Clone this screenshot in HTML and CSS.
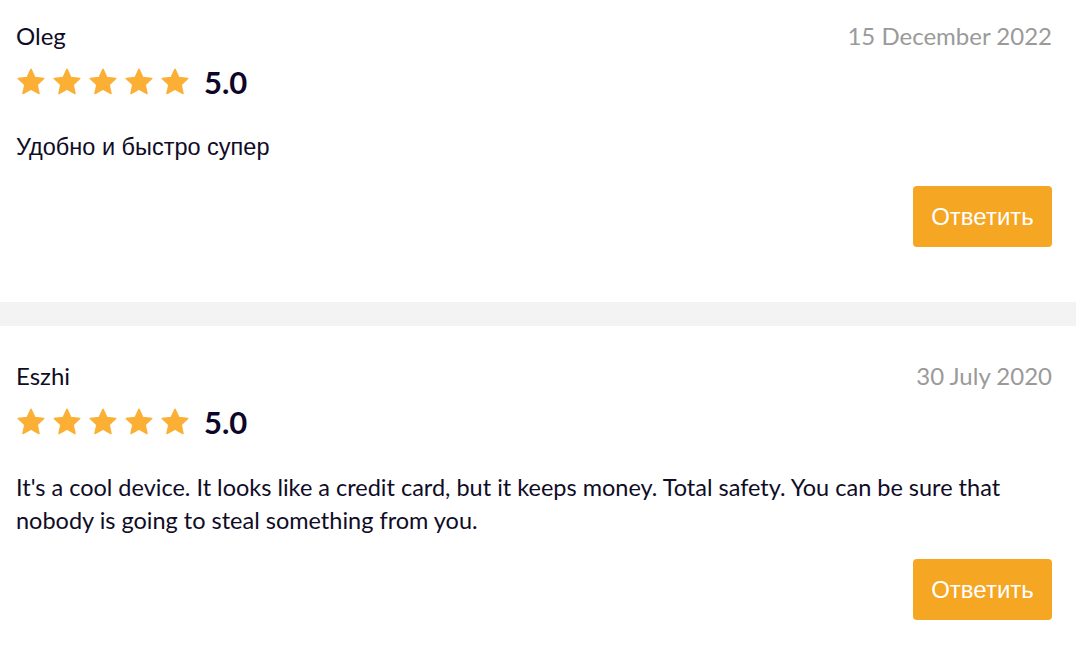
FILE: index.html
```html
<!DOCTYPE html>
<html lang="ru">
<head>
<meta charset="utf-8">
<link rel="stylesheet" href="styles.css">
</head>
<body>
<div class="reviews">
  <div class="review review-first">
    <div class="review-head">
      <div class="author">Oleg</div>
      <div class="date">15 December 2022</div>
    </div>
    <div class="rating">
      <div class="stars">
        <svg class="star" viewBox="0 0 24 24"><path d="M12 1.8l3.1 6.6 7.1.8-5.3 4.9 1.5 7.1L12 17.6l-6.4 3.6 1.5-7.1-5.3-4.9 7.1-.8z" stroke-linejoin="round"/></svg>
        <svg class="star" viewBox="0 0 24 24"><path d="M12 1.8l3.1 6.6 7.1.8-5.3 4.9 1.5 7.1L12 17.6l-6.4 3.6 1.5-7.1-5.3-4.9 7.1-.8z" stroke-linejoin="round"/></svg>
        <svg class="star" viewBox="0 0 24 24"><path d="M12 1.8l3.1 6.6 7.1.8-5.3 4.9 1.5 7.1L12 17.6l-6.4 3.6 1.5-7.1-5.3-4.9 7.1-.8z" stroke-linejoin="round"/></svg>
        <svg class="star" viewBox="0 0 24 24"><path d="M12 1.8l3.1 6.6 7.1.8-5.3 4.9 1.5 7.1L12 17.6l-6.4 3.6 1.5-7.1-5.3-4.9 7.1-.8z" stroke-linejoin="round"/></svg>
        <svg class="star" viewBox="0 0 24 24"><path d="M12 1.8l3.1 6.6 7.1.8-5.3 4.9 1.5 7.1L12 17.6l-6.4 3.6 1.5-7.1-5.3-4.9 7.1-.8z" stroke-linejoin="round"/></svg>
      </div>
      <span class="score">5.0</span>
    </div>
    <p class="text text-cyr">Удобно и быстро супер</p>
    <div class="actions"><button class="reply">Ответить</button></div>
  </div>
  <div class="review">
    <div class="review-head">
      <div class="author">Eszhi</div>
      <div class="date">30 July 2020</div>
    </div>
    <div class="rating">
      <div class="stars">
        <svg class="star" viewBox="0 0 24 24"><path d="M12 1.8l3.1 6.6 7.1.8-5.3 4.9 1.5 7.1L12 17.6l-6.4 3.6 1.5-7.1-5.3-4.9 7.1-.8z" stroke-linejoin="round"/></svg>
        <svg class="star" viewBox="0 0 24 24"><path d="M12 1.8l3.1 6.6 7.1.8-5.3 4.9 1.5 7.1L12 17.6l-6.4 3.6 1.5-7.1-5.3-4.9 7.1-.8z" stroke-linejoin="round"/></svg>
        <svg class="star" viewBox="0 0 24 24"><path d="M12 1.8l3.1 6.6 7.1.8-5.3 4.9 1.5 7.1L12 17.6l-6.4 3.6 1.5-7.1-5.3-4.9 7.1-.8z" stroke-linejoin="round"/></svg>
        <svg class="star" viewBox="0 0 24 24"><path d="M12 1.8l3.1 6.6 7.1.8-5.3 4.9 1.5 7.1L12 17.6l-6.4 3.6 1.5-7.1-5.3-4.9 7.1-.8z" stroke-linejoin="round"/></svg>
        <svg class="star" viewBox="0 0 24 24"><path d="M12 1.8l3.1 6.6 7.1.8-5.3 4.9 1.5 7.1L12 17.6l-6.4 3.6 1.5-7.1-5.3-4.9 7.1-.8z" stroke-linejoin="round"/></svg>
      </div>
      <span class="score">5.0</span>
    </div>
    <p class="text">It's a cool device. It looks like a credit card, but it keeps money. Total safety. You can be sure that nobody is going to steal something from you.</p>
    <div class="actions"><button class="reply">Ответить</button></div>
  </div>
</div>
</body>
</html>
```
FILE: styles.css
```css
html, body {
  margin: 0;
  padding: 0;
  background: #fff;
}
body {
  font-family: Lato, "Liberation Sans", Arial, sans-serif;
  color: #100c26;
}
.reviews {
  display: flex;
  flex-direction: column;
  gap: 24px;
  background: #f3f3f3;
}
.review {
  background: #fff;
  padding: 33px 24px 55px 16px;
}
.review-first {
  padding-top: 19px;
}
.review-head {
  display: flex;
  justify-content: space-between;
  align-items: center;
  height: 32px;
}
.author {
  font-size: 24px;
}
.date {
  font-size: 24px;
  color: #9a9a9a;
}
.rating {
  display: flex;
  align-items: center;
  margin-top: 15px;
  height: 32px;
}
.stars {
  display: flex;
  gap: 6px;
}
.star {
  width: 30px;
  height: 30px;
  fill: #fbb035;
  stroke: #fbb035;
  stroke-width: 1.2;
}
.score {
  font-size: 31px;
  font-weight: 700;
  margin-left: 14px;
  color: #0d0628;
}
.text {
  margin: 33px 0 0;
  font-size: 23.5px;
  line-height: 33px;
}
.text-cyr {
  font-family: "Liberation Sans", Arial, sans-serif;
}
.actions {
  display: flex;
  justify-content: flex-end;
  margin-top: 22px;
}
.reply {
  width: 139px;
  height: 61px;
  border: none;
  border-radius: 4px;
  background: #f5a623;
  color: #fff;
  font-family: "Liberation Sans", Arial, sans-serif;
  font-size: 24px;
  padding: 0;
  cursor: pointer;
}
```
